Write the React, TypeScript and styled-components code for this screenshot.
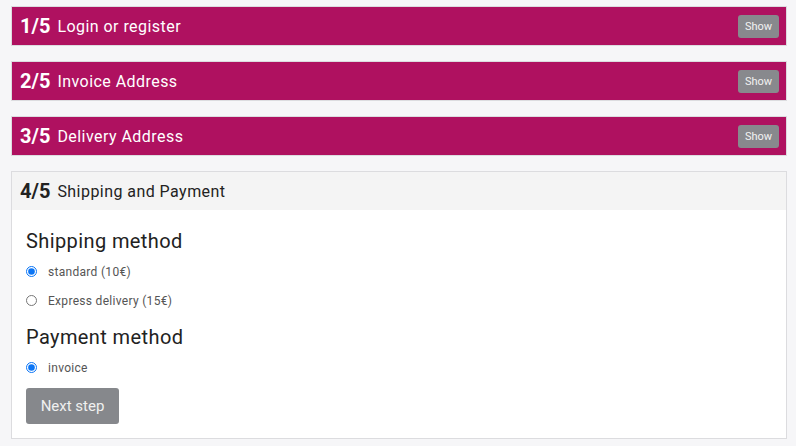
import React, { useState } from 'react'
import styled, { createGlobalStyle, css } from 'styled-components'

const GlobalStyle = createGlobalStyle`
  html, body {
    margin: 0;
    padding: 0;
    background: #f6f6f8;
    font-family: Roboto, "Liberation Sans", Arial, sans-serif;
  }
`

interface Step {
  num: number
  title: string
}

const steps: Step[] = [
  { num: 1, title: 'Login or register' },
  { num: 2, title: 'Invoice Address' },
  { num: 3, title: 'Delivery Address' },
  { num: 4, title: 'Shipping and Payment' }
]

const shippingOptions = [
  { id: 'standard', label: 'standard (10€)' },
  { id: 'express', label: 'Express delivery (15€)' }
]

export default function App() {
  const [shipping, setShipping] = useState('standard')
  const [payment, setPayment] = useState('invoice')
  const active = 4

  return (
    <>
      <GlobalStyle />
      <StyledPage>
        {steps.map(({ num, title }) => (
          <StyledCard key={num}>
            <StyledHeader active={num === active}>
              <StyledStepNum>{num}/5</StyledStepNum>
              <StyledTitle>{title}</StyledTitle>
              {num !== active && <StyledShowBtn>Show</StyledShowBtn>}
            </StyledHeader>
            {num === active && (
              <StyledBody>
                <StyledHeading>Shipping method</StyledHeading>
                {shippingOptions.map(({ id, label }) => (
                  <StyledOption key={id}>
                    <StyledRadio
                      type='radio'
                      name='shipping'
                      checked={shipping === id}
                      onChange={() => setShipping(id)}
                    />
                    {label}
                  </StyledOption>
                ))}
                <StyledHeading spaced>Payment method</StyledHeading>
                <StyledOption>
                  <StyledRadio
                    type='radio'
                    name='payment'
                    checked={payment === 'invoice'}
                    onChange={() => setPayment('invoice')}
                  />
                  invoice
                </StyledOption>
                <StyledNextBtn>Next step</StyledNextBtn>
              </StyledBody>
            )}
          </StyledCard>
        ))}
      </StyledPage>
    </>
  )
}

const StyledPage = styled.div`
  display: flex;
  flex-direction: column;
  gap: 15px;
  padding: 6px 9px 8px 11px;
`

const StyledCard = styled.section`
  border: 1px solid #dcdcdf;
  background: #fff;
`

const StyledHeader = styled.div<{ active: boolean }>`
  display: flex;
  align-items: center;
  height: 38px;
  padding: 0 7px 0 8px;

  ${({ active }) =>
    active
      ? css`
          background: #f4f4f4;
          color: #222;
        `
      : css`
          background: #af1160;
          color: #fff;
        `}
`

const StyledStepNum = styled.span`
  font-size: 20px;
  font-weight: 700;
  margin-right: 7px;
`

const StyledTitle = styled.span`
  flex: 1;
  font-size: 16px;
  letter-spacing: 0.45px;
`

const StyledShowBtn = styled.button`
  height: 23px;
  width: 41px;
  padding: 0;
  border: none;
  border-radius: 3px;
  background: #88898d;
  color: #f2f2f2;
  font-family: inherit;
  font-size: 11px;
  cursor: pointer;
`

const StyledBody = styled.div`
  display: flex;
  flex-direction: column;
  align-items: flex-start;
  padding: 19px 14px 14px;
`

const StyledHeading = styled.h3<{ spaced?: boolean }>`
  margin: ${({ spaced }) => (spaced ? '10px' : '0')} 0 4px;
  font-size: 20px;
  font-weight: 400;
  line-height: 24px;
  letter-spacing: 0.4px;
  color: #222;
`

const StyledOption = styled.label`
  display: flex;
  align-items: center;
  height: 29px;
  font-size: 12px;
  letter-spacing: 0.3px;
  color: #555;
`

const StyledRadio = styled.input`
  width: 11px;
  height: 11px;
  margin: 0 11px 0 0;
  accent-color: #0b75f5;
`

const StyledNextBtn = styled.button`
  margin-top: 6px;
  width: 93px;
  height: 36px;
  border: none;
  border-radius: 3px;
  background: #86888c;
  color: #f0f0f0;
  font-family: inherit;
  font-size: 15px;
  cursor: pointer;
`
